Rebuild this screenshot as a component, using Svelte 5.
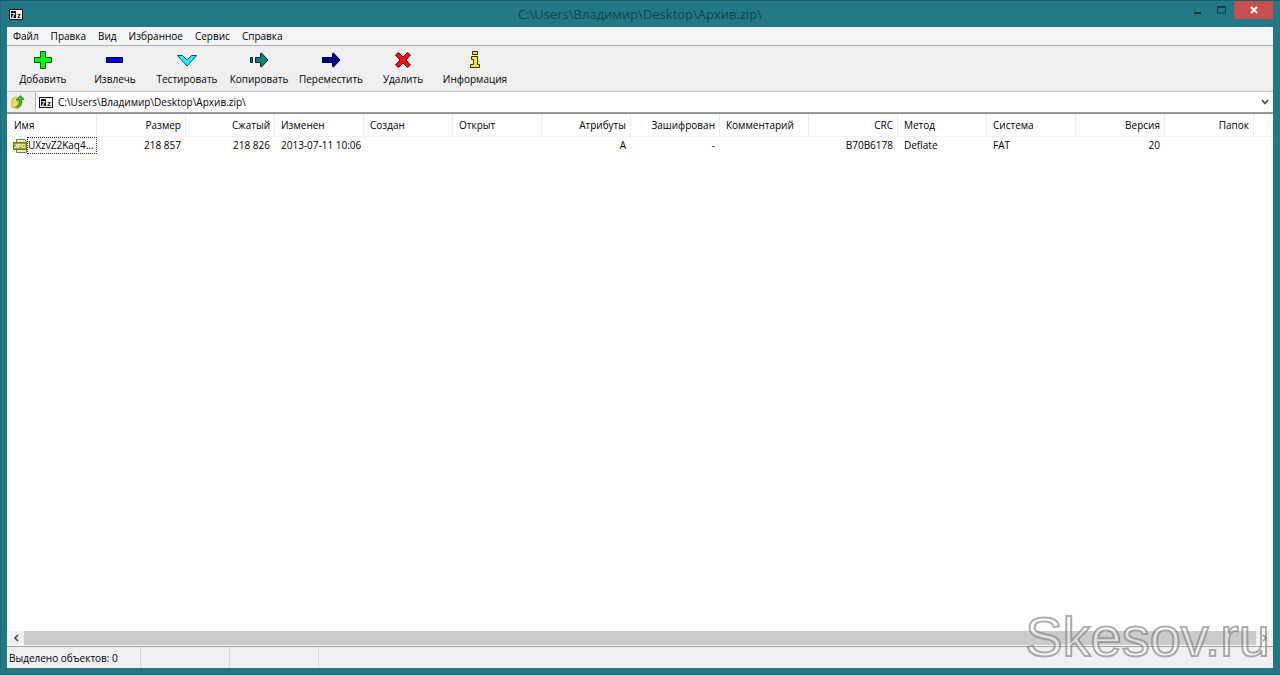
<script lang="ts">
	const menu = ['Файл', 'Правка', 'Вид', 'Избранное', 'Сервис', 'Справка'];

	const tools = [
		{ id: 'add', label: 'Добавить' },
		{ id: 'extract', label: 'Извлечь' },
		{ id: 'test', label: 'Тестировать' },
		{ id: 'copy', label: 'Копировать' },
		{ id: 'move', label: 'Переместить' },
		{ id: 'delete', label: 'Удалить' },
		{ id: 'info', label: 'Информация' }
	];

	const columns = [
		{ key: 'name', title: 'Имя' },
		{ key: 'size', title: 'Размер', right: true },
		{ key: 'packed', title: 'Сжатый', right: true },
		{ key: 'modified', title: 'Изменен' },
		{ key: 'created', title: 'Создан' },
		{ key: 'accessed', title: 'Открыт' },
		{ key: 'attributes', title: 'Атрибуты', right: true },
		{ key: 'encrypted', title: 'Зашифрован', right: true },
		{ key: 'comment', title: 'Комментарий' },
		{ key: 'crc', title: 'CRC', right: true },
		{ key: 'method', title: 'Метод' },
		{ key: 'system', title: 'Система' },
		{ key: 'version', title: 'Версия', right: true },
		{ key: 'folders', title: 'Папок', right: true }
	];

	const files: Record<string, string>[] = [
		{
			name: 'UXzvZ2Kaq4...',
			size: '218 857',
			packed: '218 826',
			modified: '2013-07-11 10:06',
			attributes: 'A',
			encrypted: '-',
			crc: 'B70B6178',
			method: 'Deflate',
			system: 'FAT',
			version: '20'
		}
	];

	let path = $state('C:\\Users\\Владимир\\Desktop\\Архив.zip\\');
	let selected = $state(0);
</script>

{#snippet logo()}
	<svg class="logo" width="14" height="11" viewBox="0 0 14 11" aria-hidden="true">
		<rect width="14" height="11" fill="#111" />
		<rect x="1.5" y="1.5" width="11" height="8" fill="#111" stroke="#fff" />
		<rect x="7" y="2" width="5" height="7" fill="#fff" />
		<text x="2" y="8.5" fill="#fff">7</text>
		<text x="8" y="8.5" fill="#111">z</text>
	</svg>
{/snippet}

<div class="window">
	<header class="titlebar">
		{@render logo()}
		<h1>{path}</h1>
		<div class="window-buttons">
			<button aria-label="Свернуть">
				<svg width="8" height="10" viewBox="0 0 8 10"><path d="M0 7h7v2H0z" fill="#10333a" /></svg>
			</button>
			<button aria-label="Развернуть">
				<svg width="10" height="8" viewBox="0 0 10 8"><path d="M.5 1h8v6h-8z" fill="none" stroke="#10414a" /><path d="M0 0h9v2H0z" fill="#10414a" /></svg>
			</button>
			<button class="close" aria-label="Закрыть">
				<svg width="8" height="8" viewBox="0 0 8 8"><path d="M1 1l6 6M7 1L1 7" stroke="#fff" stroke-width="1.8" /></svg>
			</button>
		</div>
	</header>

	<main>
		<nav class="menu">
			{#each menu as item}
				<button>{item}</button>
			{/each}
		</nav>

		<div class="toolbar">
			{#each tools as tool}
				<button>
					<svg width="20" height="20" viewBox="0 0 20 20" stroke-width="1" aria-hidden="true">
						{#if tool.id === 'add'}
							<path d="M7.5 1.5h5v6h6v5h-6v6h-5v-6h-6v-5h6z" fill="#0f0" stroke="#064a06" />
						{:else if tool.id === 'extract'}
							<path d="M1.5 7.5h16v5h-16z" fill="#0000e0" stroke="#00002c" />
						{:else if tool.id === 'test'}
							<path d="M.5 5.5h5l4.5 4.5 4.5-4.5h5L10 16z" fill="#1ff4fb" stroke="#064c55" />
						{:else if tool.id === 'copy'}
							<path d="M1.5 7.5h2v5h-2zM6.5 7.5h5v-4l1-.5 6.500 7-6.500 7-1-.5v-4h-5z" fill="#0c8078" stroke="#032824" />
						{:else if tool.id === 'move'}
							<path d="M1.5 7.5h10v-4l1-.5 6.500 7-6.500 7-1-.5v-4h-10z" fill="#000090" stroke="#000022" />
						{:else if tool.id === 'delete'}
							<path d="M2.5 5l3-2.500 4.500 4.500 4.500-4.500 3 2.500-4.500 5 4.500 5-3 2.500-4.500-4.500-4.500 4.500-3-2.500 4.500-5z" fill="#f80d14" stroke="#5c0408" />
						{:else}
							<path d="M7.5 1.5h5v3h-5zM6.5 6.5h6v8h2v3h-9v-3h3v-5h-2z" fill="#ffee10" stroke="#2e2b00" />
						{/if}
					</svg>
					<span>{tool.label}</span>
				</button>
			{/each}
		</div>

		<div class="address">
			<button class="up" aria-label="На уровень вверх">
				<svg width="14" height="16" viewBox="0 0 14 16">
					<path d="M1 5l4-2 2 1v11l-6-2z" fill="#f4dc62" stroke="#c9ae45" />
					<path d="M7 5l3-1v8l-3 3z" fill="#ffeb83" stroke="#cfb54c" />
					<path d="M4.5 13c4-1 4-4 3.5-7H5l4.5-4.500L13 5.500h-2.500c1 5-1 8-6 7.500z" fill="#4cba27" stroke="#247c12" stroke-width=".8" />
				</svg>
			</button>
			<div class="combo">
				{@render logo()}
				<input aria-label="Путь" bind:value={path} />
				<button aria-label="Показать список">
					<svg width="8" height="6" viewBox="0 0 8 6"><path d="M1 1l3 3.5L7 1" fill="none" stroke="#444" stroke-width="1.6" /></svg>
				</button>
			</div>
		</div>

		<div class="list">
			<table>
				<thead>
					<tr>
						{#each columns as column}
							<th class:right={column.right}>{column.title}</th>
						{/each}
						<th class="rest" aria-hidden="true"></th>
					</tr>
				</thead>
				<tbody>
					{#each files as file, i}
						<tr onclick={() => (selected = i)}>
							{#each columns as column}
								<td class:right={column.right} class:name={column.key === 'name'}>
									{#if column.key === 'name'}
										<div class="file">
											<svg width="14" height="14" viewBox="0 0 14 14" aria-hidden="true">
												<path d="M3.5.5h8l2 2v11h-10z" fill="#e8e8d8" stroke="#77785a" />
												<rect x=".5" y="3.5" width="13" height="7" fill="#a4a213" stroke="#777510" />
												<text x="1" y="9" fill="#fffff0">JPG</text>
											</svg>
											<span class:focused={selected === i}>{file.name}</span>
										</div>
									{:else}
										{file[column.key] ?? ''}
									{/if}
								</td>
							{/each}
							<td></td>
						</tr>
					{/each}
				</tbody>
			</table>
		</div>

		<div class="scrollbar">
			<button aria-label="Влево">
				<svg width="6" height="8" viewBox="0 0 6 8"><path d="M5 1L2 4l3 3" fill="none" stroke="#444" stroke-width="1.6" /></svg>
			</button>
			<div class="thumb"></div>
			<button aria-label="Вправо">
				<svg width="6" height="8" viewBox="0 0 6 8"><path d="M1 1l3 3-3 3" fill="none" stroke="#555" stroke-width="1.6" /></svg>
			</button>
		</div>

		<footer class="status">
			<span class="count">Выделено объектов: 0</span>
			<span></span>
			<span></span>
		</footer>
	</main>

	<div class="watermark">Skesov.ru</div>
</div>

<style>
	:global(body) {
		background: #227985;
	}

	.window {
		position: relative;
		box-sizing: border-box;
		min-height: 100vh;
		display: flex;
		flex-direction: column;
		padding: 0 7px 7px;
		border-top: 1px solid #17616d;
		background: #227985;
		box-shadow: inset 1px -1px #1c6c78;
		font-family: 'Open Sans', 'Noto Sans', sans-serif;
		font-size: 10px;
		color: #000;
	}

	button {
		display: flex;
		align-items: center;
		justify-content: center;
		padding: 0;
		border: none;
		background: none;
		color: inherit;
		font: inherit;
	}

	svg {
		display: block;
		flex: none;
	}

	.logo text {
		font: bold 8px 'Liberation Sans', sans-serif;
	}

	.titlebar {
		display: flex;
		align-items: center;
		height: 26px;
	}

	.titlebar .logo {
		margin-left: 2px;
	}

	h1 {
		flex: 1;
		margin: 0;
		padding-left: 71px;
		text-align: center;
		font-size: 13px;
		font-weight: 400;
		color: #0d4650;
	}

	.window-buttons {
		display: flex;
		align-self: flex-start;
	}

	.window-buttons button {
		width: 24px;
		height: 18px;
	}

	.window-buttons .close {
		width: 39px;
		background: #c74f50;
	}

	main {
		flex: 1;
		display: flex;
		flex-direction: column;
		background: #fff;
	}

	.menu {
		display: flex;
		gap: 12px;
		height: 18px;
		padding-left: 6px;
		background: #f4f5f6;
		border-bottom: 1px solid #acaeb0;
	}

	.toolbar {
		display: flex;
		height: 45px;
		background: #efeff0;
		border-bottom: 1px solid #c2c3c5;
	}

	.toolbar button {
		flex-direction: column;
		width: 72px;
		line-height: 18px;
		white-space: nowrap;
	}

	.address {
		display: flex;
		height: 20px;
		background: #efeff0;
		border-bottom: 2px solid #97999b;
	}

	.up {
		width: 22px;
		margin-right: 6px;
	}

	.combo {
		flex: 1;
		display: flex;
		align-items: center;
		padding-left: 3px;
		border-left: 1px solid #b8b9bb;
		background: #fff;
	}

	.combo input {
		flex: 1;
		min-width: 0;
		margin-left: 5px;
		padding: 0;
		border: none;
		outline: none;
		background: none;
		color: inherit;
		font: inherit;
		line-height: 18px;
	}

	.combo button {
		width: 17px;
		height: 20px;
	}

	.list {
		flex: 1;
		padding-left: 1px;
		overflow: hidden;
	}

	table {
		width: 100%;
		table-layout: fixed;
		border-spacing: 0;
	}

	th,
	td {
		box-sizing: border-box;
		height: 17px;
		padding: 0 5px 0 6px;
		text-align: left;
		font-weight: 400;
		line-height: 16px;
		white-space: nowrap;
	}

	td {
		vertical-align: top;
	}

	th {
		width: 89px;
		height: 23px;
		padding-right: 4px;
		border-right: 1px solid #ebeff5;
		border-bottom: 1px solid #f0f3f7;
	}

	.rest {
		width: auto;
		padding: 0;
		border-right: none;
	}

	.right {
		text-align: right;
	}

	.name {
		padding: 0;
	}

	.file {
		display: flex;
		align-items: center;
		padding-left: 5px;
	}

	.file text {
		font: bold 6px 'Liberation Sans', sans-serif;
	}

	.file span {
		flex: 1;
		border: 1px solid transparent;
		line-height: 15px;
	}

	.file .focused {
		border: 1px dotted #333;
	}

	.scrollbar {
		display: flex;
		height: 14px;
		margin-bottom: 1px;
		background: #f0f0f0;
	}

	.scrollbar button {
		width: 17px;
	}

	.thumb {
		flex: 1;
		background: #cbcbcc;
	}

	.status {
		display: flex;
		height: 21px;
		border-top: 1px solid #9d9fa2;
		background: #f0f0f1;
		line-height: 22px;
	}

	.status span {
		box-sizing: border-box;
		width: 89px;
		border-right: 1px solid #d9d9da;
	}

	.status .count {
		width: 134px;
		padding-left: 2px;
	}

	.watermark {
		position: absolute;
		right: 10px;
		bottom: 6px;
		font-family: 'Liberation Sans', sans-serif;
		font-size: 56px;
		line-height: 64px;
		color: rgba(255, 255, 255, 0.4);
		-webkit-text-stroke: 2px rgba(120, 120, 125, 0.6);
		pointer-events: none;
	}
</style>
